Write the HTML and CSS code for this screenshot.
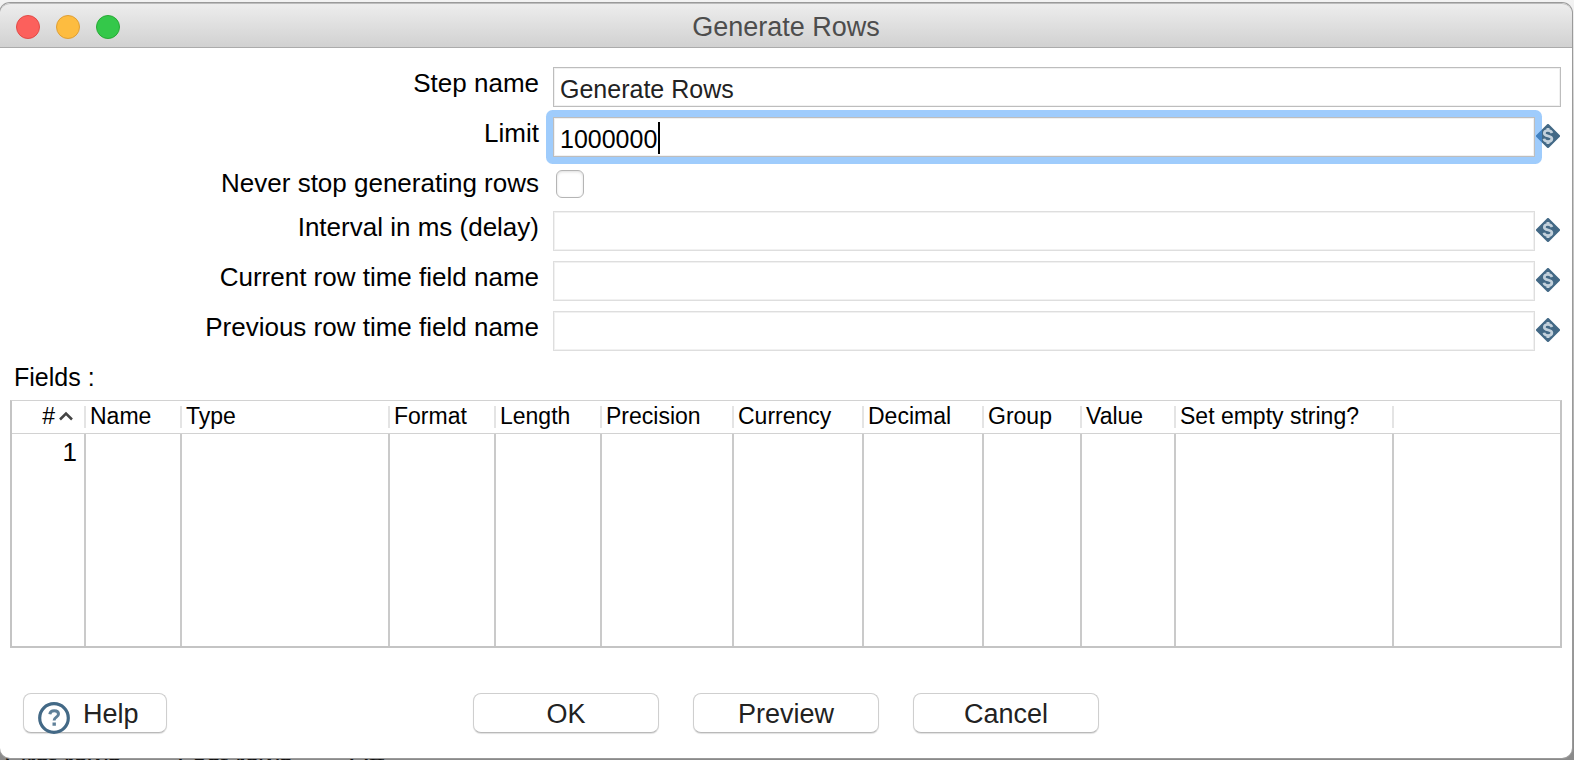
FILE: index.html
```html
<!DOCTYPE html>
<html lang="en">
<head>
<meta charset="utf-8">
<title>Generate Rows</title>
<link rel="stylesheet" href="styles.css">
</head>
<body>
<svg class="defs" width="0" height="0" aria-hidden="true">
  <symbol id="variable" viewBox="0 0 24 24">
    <path d="M12 1.500 22.500 12 12 22.500 1.500 12Z" fill="#436986" stroke="#436986" stroke-width="3" stroke-linejoin="round"/>
    <path d="M16 9C15.500 7.300 14 6.500 12 6.500c-2.200 0-3.700 1-3.700 2.700 0 3.800 7.600 1.800 7.600 5.500 0 1.700-1.700 2.800-3.900 2.800-2.200 0-3.700-.9-4.100-2.700" fill="none" stroke="#c3d1dc" stroke-width="2.700"/>
    <path d="M12 4v3M12 17v3" fill="none" stroke="#c3d1dc" stroke-width="3"/>
  </symbol>
</svg>
<div class="backdrop" aria-hidden="true"><span>First rows</span><span>Last rows</span><span>Off</span></div>
<main class="window">
  <header class="titlebar">
    <div class="lights">
      <button class="light close" type="button" aria-label="Close"></button>
      <button class="light minimize" type="button" aria-label="Minimize"></button>
      <button class="light maximize" type="button" aria-label="Zoom"></button>
    </div>
    <h1 class="title">Generate Rows</h1>
  </header>
  <form class="content">
    <div class="form">
      <label class="label" for="step">Step name</label>
      <div class="control"><input class="text" id="step" type="text" value="Generate Rows"></div>
      <label class="label" for="limit">Limit</label>
      <div class="control"><span class="edit"><input class="text" id="limit" type="text" value="1000000"><span class="caret"><span class="caret-space">1000000</span></span></span><svg class="variable"><use href="#variable"/></svg></div>
      <label class="label" for="never">Never stop generating rows</label>
      <div class="control check"><input class="checkbox" id="never" type="checkbox"></div>
      <label class="label" for="interval">Interval in ms (delay)</label>
      <div class="control"><input class="text dim" id="interval" type="text" disabled><svg class="variable"><use href="#variable"/></svg></div>
      <label class="label" for="current">Current row time field name</label>
      <div class="control"><input class="text dim" id="current" type="text" disabled><svg class="variable"><use href="#variable"/></svg></div>
      <label class="label" for="previous">Previous row time field name</label>
      <div class="control"><input class="text dim" id="previous" type="text" disabled><svg class="variable"><use href="#variable"/></svg></div>
    </div>
    <h2 class="fields-title" id="fields-title">Fields :</h2>
    <table class="fields" aria-labelledby="fields-title">
      <colgroup>
        <col class="c-num"><col class="c-name"><col class="c-type"><col class="c-format"><col class="c-length"><col class="c-precision"><col class="c-currency"><col class="c-decimal"><col class="c-group"><col class="c-value"><col class="c-empty"><col>
      </colgroup>
      <thead>
        <tr>
          <th class="num">#<svg class="sort" viewBox="0 0 16 10"><path d="M2 8.500 8 2.500 14 8.500" fill="none" stroke="#444" stroke-width="2.500"/></svg></th>
          <th>Name</th><th>Type</th><th>Format</th><th>Length</th><th>Precision</th><th>Currency</th><th>Decimal</th><th>Group</th><th>Value</th><th>Set empty string?</th><th></th>
        </tr>
      </thead>
      <tbody>
        <tr><td class="num">1</td><td></td><td></td><td></td><td></td><td></td><td></td><td></td><td></td><td></td><td></td><td></td></tr>
        <tr class="filler"><td></td><td></td><td></td><td></td><td></td><td></td><td></td><td></td><td></td><td></td><td></td><td></td></tr>
      </tbody>
    </table>
    <footer class="actions">
      <button class="button help" type="button"><svg class="help-icon" viewBox="0 0 32 32"><circle cx="16" cy="16" r="14.300" fill="#fff" stroke="#436986" stroke-width="3.200"/><path d="M11.800 12.200c.3-2.300 1.900-3.500 4.400-3.500 2.600 0 4.300 1.300 4.300 3.300 0 3.300-4.400 3-4.400 6.500" fill="none" stroke="#5f8099" stroke-width="3"/><path d="M14.500 20.500h3.400v3.300h-3.400z" fill="#5f8099"/></svg>Help</button>
      <div class="group">
        <button class="button" type="button">OK</button>
        <button class="button" type="button">Preview</button>
        <button class="button" type="button">Cancel</button>
      </div>
    </footer>
  </form>
</main>
</body>
</html>
```
FILE: styles.css
```css
* { box-sizing: border-box; }

body {
  margin: 0;
  min-height: 100vh;
  padding: 3px 2px 2px 0;
  overflow: hidden;
  background: linear-gradient(#f3f3f3, #d0d0d0 15%, #b0b0b0 60%, #8a8a8a);
  color: #000;
  font-family: "Liberation Sans", Arial, sans-serif;
  font-size: 26px;
}

.defs { position: absolute; }

.backdrop {
  position: absolute;
  left: 4px;
  bottom: -16px;
  display: flex;
  gap: 56px;
  font-size: 27px;
  line-height: 24px;
  color: #111;
}

.window {
  position: relative;
  display: flex;
  flex-direction: column;
  min-height: calc(100vh - 5px);
  border-radius: 10px;
  background: #fff;
  box-shadow: 0 0 0 1px #9a9a9a;
  overflow: hidden;
}

.titlebar {
  display: grid;
  grid-template-columns: 1fr auto 1fr;
  align-items: center;
  height: 45px;
  padding: 2px 16px 0;
  border-top: 1px solid #bdbdbd;
  border-bottom: 1px solid #ababab;
  border-radius: 10px 10px 0 0;
  background: linear-gradient(#ededed, #d1d1d1);
}

.lights { display: flex; gap: 16px; }

.light {
  width: 24px;
  height: 24px;
  padding: 0;
  border: 1px solid;
  border-radius: 50%;
}
.close { background: #fc605c; border-color: #e24b47; }
.minimize { background: #fdbc40; border-color: #df9f35; }
.maximize { background: #34c84a; border-color: #28aa35; }

.title {
  margin: 0;
  font-size: 27px;
  font-weight: 400;
  line-height: 32px;
  color: #4d4d4d;
}

.content {
  flex: 1;
  display: flex;
  flex-direction: column;
  padding: 19px 10px 24px;
}

.form {
  display: grid;
  grid-template-columns: 529fr 1008fr;
  column-gap: 14px;
  row-gap: 10px;
  padding-right: 1px;
}

.label {
  line-height: 32px;
  text-align: right;
  white-space: nowrap;
}

.control {
  display: flex;
  align-items: flex-start;
}

.text {
  flex: 1;
  width: 100%;
  min-width: 0;
  height: 40px;
  padding: 4px 6px 0;
  border: 1px solid #bdbdbd;
  border-radius: 0;
  outline: 0;
  background: #fff;
  box-shadow: inset 0 0 0 1px #f1f1f1;
  color: #222;
  font: 25px "Liberation Sans", Arial, sans-serif;
}
.text.dim { border-color: #dedede; }

.edit {
  position: relative;
  z-index: 1;
  flex: 1;
  display: flex;
  border-radius: 2px;
  box-shadow: 0 0 0 7px rgba(64, 153, 249, .5);
}
.edit .text { color: #000; }

.caret {
  position: absolute;
  left: 7px;
  top: 5px;
  height: 32px;
  padding-right: 1px;
  border-right: 2px solid #000;
  font-size: 25px;
  pointer-events: none;
}
.caret-space { visibility: hidden; }

.variable {
  flex: none;
  width: 24px;
  height: 24px;
  margin: 7px 1px 0;
}

.check { height: 34px; padding: 3px 3px 0; }

.checkbox {
  appearance: none;
  width: 28px;
  height: 28px;
  margin: 0;
  border: 1px solid #b5b5b5;
  border-radius: 6px;
  background: #fff;
  box-shadow: inset 0 1px 3px #ddd;
}

.fields-title {
  margin: 10px 4px 7px;
  font-size: 25px;
  font-weight: 400;
  line-height: 32px;
}

.fields {
  table-layout: fixed;
  width: 100%;
  border: 2px solid #c4c4c4;
  border-top: 1px solid #d2d2d2;
  border-collapse: separate;
  border-spacing: 0;
}

.c-num { width: 74px; }
.c-name { width: 96px; }
.c-type { width: 208px; }
.c-format { width: 106px; }
.c-length { width: 106px; }
.c-precision { width: 132px; }
.c-currency { width: 130px; }
.c-decimal { width: 120px; }
.c-group { width: 98px; }
.c-value { width: 94px; }
.c-empty { width: 218px; }

.fields th {
  height: 33px;
  padding: 0 0 2px 4px;
  border-bottom: 1px solid #d2d2d2;
  background: linear-gradient(#e4e4e4, #e4e4e4) right 5px / 2px 22px no-repeat;
  font-size: 23px;
  font-weight: 400;
  line-height: 30px;
  text-align: left;
  white-space: nowrap;
}

.fields td {
  height: 36px;
  padding: 0 7px 0 4px;
  border-right: 2px solid #cacaca;
  line-height: 36px;
}
.fields .filler td { height: 176px; }
.fields th:last-child { background: none; }
.fields td:last-child { border-right: 0; }
.fields .num { text-align: right; }
.fields th.num { padding-right: 12px; }

.sort { width: 16px; height: 10px; margin-left: 3px; vertical-align: 3px; }

.actions {
  display: grid;
  grid-template-columns: 1fr auto 1fr;
  margin-top: auto;
  padding: 0 13px;
}

.group { display: flex; gap: 34px; }

.button {
  width: 186px;
  height: 40px;
  padding: 3px 0 0;
  border: 1px solid #cfcfcf;
  border-bottom-color: #b9b9b9;
  border-radius: 8px;
  background: #fff;
  box-shadow: 0 1px 1px #e0e0e0;
  color: #222;
  font: 27px "Liberation Sans", Arial, sans-serif;
}

.actions { padding-bottom: 1px; }

.help {
  display: flex;
  align-items: center;
  gap: 13px;
  width: 144px;
  padding-left: 14px;
}

.help-icon { flex: none; width: 32px; height: 32px; margin-top: 6px; }
```
